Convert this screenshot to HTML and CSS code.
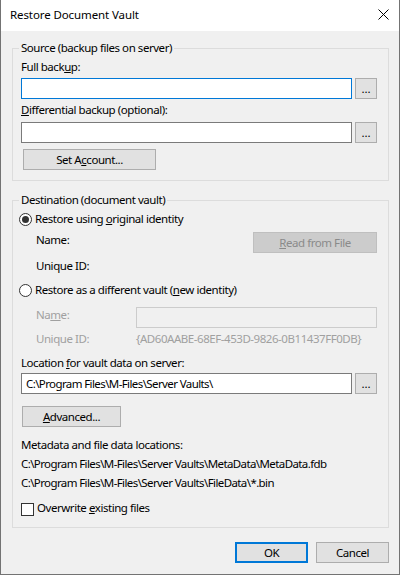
FILE: index.html
```html
<!DOCTYPE html>
<html>
<head>
<meta charset="utf-8">
<title>Restore Document Vault</title>
<link rel="stylesheet" href="styles.css">
</head>
<body>
<div class="window">
  <div class="titlebar">
    <span class="title">Restore Document Vault</span>
    <svg class="close" width="11" height="11" viewBox="0 0 11 11"><path d="M0.5 0.5L10.5 10.5M10.5 0.5L0.5 10.5" stroke="#000" stroke-width="1" fill="none"/></svg>
  </div>
  <div class="client">
    <fieldset class="group g-source">
      <legend>Source (backup files on server)</legend>
      <div class="label l-full">Full back<u>u</u>p:</div>
      <div class="field-row r-full">
        <div class="textbox focused"></div>
        <div class="btn browse">...</div>
      </div>
      <div class="label l-diff"><u>D</u>ifferential backup (optional):</div>
      <div class="field-row r-diff">
        <div class="textbox"></div>
        <div class="btn browse">...</div>
      </div>
      <div class="btn set-account">Set A<u>c</u>count...</div>
    </fieldset>

    <fieldset class="group g-dest">
      <legend>Destination (document vault)</legend>
      <div class="option r-orig">
        <span class="radio checked"></span>
        <span>Restore using <u>o</u>riginal identity</span>
      </div>
      <div class="id-row r-name">
        <span class="id-label">Name:</span>
        <div class="btn disabled read-file"><u>R</u>ead from File</div>
      </div>
      <div class="id-row r-uid">
        <span class="id-label">Unique ID:</span>
      </div>
      <div class="option r-new">
        <span class="radio"></span>
        <span>Restore as a different vault (<u>n</u>ew identity)</span>
      </div>
      <div class="id-row r-newname muted">
        <span class="id-label">Na<u>m</u>e:</span>
        <div class="textbox disabled-box"></div>
      </div>
      <div class="id-row r-newuid muted">
        <span class="id-label">Unique ID:</span>
        <span class="id-value">{AD60AABE-68EF-453D-9826-0B11437FF0DB}</span>
      </div>
      <div class="label l-loc">Location <u>f</u>or vault data on server:</div>
      <div class="field-row r-loc">
        <div class="textbox path-text">C:\Program Files\M-Files\Server Vaults\</div>
        <div class="btn browse">...</div>
      </div>
      <div class="btn advanced"><u>A</u>dvanced...</div>
      <div class="label l-meta">Metadata and file data locations:</div>
      <div class="label l-path1 path-text">C:\Program Files\M-Files\Server Vaults\MetaData\MetaData.fdb</div>
      <div class="label l-path2 path-text">C:\Program Files\M-Files\Server Vaults\FileData\*.bin</div>
      <div class="option r-overwrite">
        <span class="checkbox"></span>
        <span>Overwrite <u>e</u>xisting files</span>
      </div>
    </fieldset>

    <div class="footer">
      <div class="btn default">OK</div>
      <div class="btn">Cancel</div>
    </div>
  </div>
</div>
</body>
</html>
```
FILE: styles.css
```css
html, body {
  margin: 0;
  padding: 0;
  background: #ffffff;
}

body {
  font-family: "Noto Sans", "Open Sans", sans-serif;
  font-size: 11.5px;
  line-height: 16px;
  letter-spacing: -0.45px;
  color: #000000;
}

u {
  text-decoration: underline;
  text-underline-offset: 1px;
}

.window {
  width: 400px;
  height: 575px;
  box-sizing: border-box;
  border: 1px solid #737373;
  border-top: none;
  display: flex;
  flex-direction: column;
}

.titlebar {
  height: 31px;
  box-sizing: border-box;
  background: #ffffff;
  display: flex;
  justify-content: space-between;
  align-items: flex-start;
  padding: 7px 10px 0 9px;
}

.title {
  letter-spacing: -0.1px;
}

.close {
  display: block;
  margin-top: 2px;
}

.client {
  flex: 1;
  background: #f0f0f0;
  display: flex;
  flex-direction: column;
}

.group {
  display: block;
  min-width: 0;
  border: 1px solid #dcdcdc;
  margin: 9px 10px 0 11px;
  padding: 0 11px 10px 8px;
}

.group legend {
  margin-left: -2px;
  padding: 0 2px;
  line-height: 16px;
  height: 16px;
}

.g-dest {
  margin-top: 11px;
  padding-bottom: 11px;
}

.label {
  height: 16px;
  white-space: nowrap;
}

.path-text {
  letter-spacing: -0.6px;
}

.l-full { margin-top: 3px; }
.l-diff { margin-top: 3px; }

.field-row {
  display: flex;
  gap: 3px;
}

.r-full { margin-top: 3px; }
.r-diff { margin-top: 4px; }

.textbox {
  flex: 1;
  height: 21px;
  box-sizing: border-box;
  border: 1px solid #7a7a7a;
  background: #ffffff;
  padding: 0 4px;
  line-height: 19px;
  white-space: nowrap;
  overflow: hidden;
}

.textbox.focused {
  border-color: #0078d7;
}

.btn {
  height: 21px;
  box-sizing: border-box;
  border: 1px solid #adadad;
  background: #e1e1e1;
  text-align: center;
  line-height: 19px;
  white-space: nowrap;
}

.browse {
  width: 22px;
  flex: none;
  letter-spacing: 0;
}

.set-account {
  width: 133px;
  margin: 6px 0 0 2px;
}

.option {
  display: flex;
  align-items: center;
  height: 16px;
}

.radio {
  width: 13px;
  height: 13px;
  box-sizing: border-box;
  border: 1px solid #333333;
  border-radius: 50%;
  background: #ffffff;
  margin-right: 3px;
  display: flex;
  align-items: center;
  justify-content: center;
  flex: none;
}

.radio.checked::after {
  content: "";
  width: 7px;
  height: 7px;
  border-radius: 50%;
  background: #333333;
}

.r-orig {
  margin: 3px 0 0 -2px;
}

.r-new {
  margin: 8px 0 0 -2px;
}

.id-row {
  display: flex;
  align-items: flex-start;
  padding-left: 15px;
}

.id-label {
  width: 100px;
  flex: none;
  line-height: 16px;
}

.r-name {
  margin-top: 5px;
  justify-content: space-between;
}

.read-file {
  width: 124px;
  background: #cccccc;
  border-color: #bfbfbf;
  color: #8a8a8a;
}

.r-uid {
  margin-top: 5px;
}

.muted {
  color: #a0a0a0;
}

.r-newname {
  margin-top: 9px;
}

.disabled-box {
  flex: none;
  width: 241px;
  background: #f0f0f0;
  border-color: #cccccc;
}

.r-newuid {
  margin-top: 3px;
}

.id-value {
  white-space: nowrap;
}

.l-loc { margin-top: 8px; }
.r-loc { margin-top: 2px; }

.advanced {
  width: 99px;
  margin: 12px 0 0 1px;
}

.l-meta { margin-top: 10px; }
.l-path1 { margin-top: 3px; }
.l-path2 { margin-top: 3px; }

.r-overwrite {
  margin-top: 9px;
  align-items: flex-start;
}

.checkbox {
  width: 13px;
  height: 13px;
  box-sizing: border-box;
  border: 1px solid #333333;
  background: #ffffff;
  margin: 3px 3px 0 0;
  flex: none;
}

.footer {
  display: flex;
  justify-content: flex-end;
  gap: 8px;
  margin-top: 14px;
  padding-right: 10px;
}

.footer .btn {
  width: 73px;
}

.footer .default {
  border: 2px solid #0078d7;
  line-height: 17px;
}
```
